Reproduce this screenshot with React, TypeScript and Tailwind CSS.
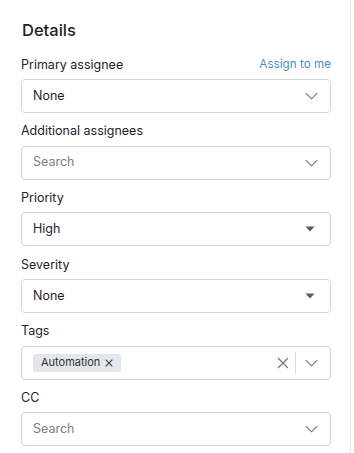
import React from "react";

const Chevron = () => (
  <svg width="13" height="8" viewBox="0 0 13 8" fill="none" className="shrink-0">
    <path d="M0.8 1.2L6.5 6.8L12.2 1.2" stroke="#6f747b" strokeWidth="1.1" />
  </svg>
);

const Caret = () => (
  <svg width="10" height="6" viewBox="0 0 10 6" className="shrink-0">
    <path d="M0.5 0.5H9.5L5 5.5Z" fill="#555b63" />
  </svg>
);

const Label = ({ children, right }: { children: React.ReactNode; right?: React.ReactNode }) => (
  <div className="flex h-[20px] items-center justify-between text-[12.5px] text-[#1f2328]">
    <span>{children}</span>
    {right}
  </div>
);

const Box = ({ children }: { children: React.ReactNode }) => (
  <div className="mt-[4px] flex h-[34px] items-center rounded-[4px] border border-[#d1d5db] bg-white pl-[11px] pr-[12px]">
    {children}
  </div>
);

export default function App() {
  return (
    <div
      className="h-[453px] w-[351px] border-r border-[#e3e5e8] bg-white pl-[21px] pr-[19px] pt-[18px]"
      style={{ fontFamily: "Inter, 'Noto Sans', sans-serif" }}
    >
      <div className="h-[24px] pl-px text-[16.5px] font-medium leading-[24px] text-[#1f2328]">Details</div>
      <div className="mt-[13px] flex flex-col gap-[8.67px]">
        <div>
          <Label right={<span className="text-[11.7px] text-[#4a8fd0]">Assign to me</span>}>Primary assignee</Label>
          <Box>
            <span className="flex-1 text-[12.5px] text-[#1f2328]">None</span>
            <Chevron />
          </Box>
        </div>
        <div>
          <Label>Additional assignees</Label>
          <Box>
            <span className="flex-1 text-[12.5px] text-[#7a7f87]">Search</span>
            <Chevron />
          </Box>
        </div>
        <div>
          <Label>Priority</Label>
          <Box>
            <span className="flex-1 text-[12.5px] text-[#1f2328]">High</span>
            <span className="mr-[3px]"><Caret /></span>
          </Box>
        </div>
        <div>
          <Label>Severity</Label>
          <Box>
            <span className="flex-1 text-[12.5px] text-[#1f2328]">None</span>
            <span className="mr-[3px]"><Caret /></span>
          </Box>
        </div>
        <div>
          <Label>Tags</Label>
          <Box>
            <div className="flex flex-1 items-center">
              <span className="flex h-[18px] items-center rounded-[2px] bg-[#e3e6ea] pl-[8px] pr-[8px] text-[11px] text-[#2d3136]">
                Automation
                <svg width="8" height="8" viewBox="0 0 8 8" className="ml-[5px]">
                  <path d="M0.7 0.7L7.3 7.3M7.3 0.7L0.7 7.3" stroke="#3a3f45" strokeWidth="1.1" />
                </svg>
              </span>
            </div>
            <svg width="12" height="12" viewBox="0 0 12 12" className="mr-[6px] shrink-0">
              <path d="M1 1L11 11M11 1L1 11" stroke="#6b7280" strokeWidth="1.1" />
            </svg>
            <div className="mr-[9px] h-[22px] w-px bg-[#d8dbe0]" />
            <Chevron />
          </Box>
        </div>
        <div>
          <Label>CC</Label>
          <Box>
            <span className="flex-1 text-[12.5px] text-[#7a7f87]">Search</span>
            <Chevron />
          </Box>
        </div>
      </div>
    </div>
  );
}
